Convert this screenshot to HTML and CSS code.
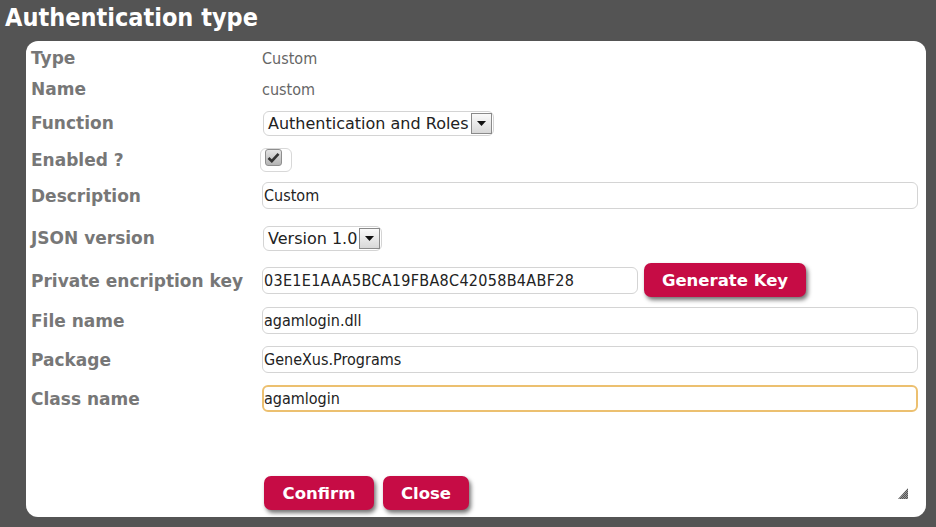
FILE: index.html
```html
<!DOCTYPE html>
<html>
<head>
<meta charset="utf-8">
<link rel="stylesheet" href="styles.css">
</head>
<body>
<h1 class="title">Authentication type</h1>
<div class="panel">
  <div class="form">
    <div class="label">Type</div>
    <div class="value">Custom</div>

    <div class="label">Name</div>
    <div class="value">custom</div>

    <div class="label">Function</div>
    <div><span class="select"><span class="select-text">Authentication and Roles</span><span class="arrow"><svg width="9" height="5" viewBox="0 0 9 5"><path d="M0 0H9L4.5 5Z" fill="#111"/></svg></span></span></div>

    <div class="label">Enabled ?</div>
    <div><span class="check-wrap"><span class="check"><svg width="13" height="11" viewBox="0 0 13 11"><path d="M1.5 6 L4.8 9.2 L11.5 1.8" fill="none" stroke="#333" stroke-width="2.6"/></svg></span></span></div>

    <div class="label">Description</div>
    <div class="input">Custom</div>

    <div class="label">JSON version</div>
    <div><span class="select"><span class="select-text">Version 1.0</span><span class="arrow"><svg width="9" height="5" viewBox="0 0 9 5"><path d="M0 0H9L4.5 5Z" fill="#111"/></svg></span></span></div>

    <div class="label">Private encription key</div>
    <div class="key-row"><div class="input key">03E1E1AAA5BCA19FBA8C42058B4ABF28</div><button class="btn gen">Generate Key</button></div>

    <div class="label">File name</div>
    <div class="input">agamlogin.dll</div>

    <div class="label">Package</div>
    <div class="input">GeneXus.Programs</div>

    <div class="label">Class name</div>
    <div class="input focus">agamlogin</div>
  </div>
  <div class="actions">
    <button class="btn confirm">Confirm</button>
    <button class="btn close">Close</button>
  </div>
  <svg class="grip" width="10" height="11" viewBox="0 0 10 11">
    <defs>
      <pattern id="dots" width="2" height="2" patternUnits="userSpaceOnUse">
        <rect width="1" height="1" fill="#555"/>
        <rect x="1" y="1" width="1" height="1" fill="#555"/>
        <rect x="1" width="1" height="1" fill="#999"/>
        <rect y="1" width="1" height="1" fill="#999"/>
      </pattern>
    </defs>
    <path d="M10 0V11H0Z" fill="url(#dots)"/>
  </svg>
</div>
</body>
</html>
```

FILE: styles.css
```css
* { box-sizing: border-box; }
html, body { margin: 0; padding: 0; }
body {
  background: #545454;
  width: 936px;
  height: 527px;
  overflow: hidden;
  font-family: "DejaVu Sans Condensed", "DejaVu Sans", sans-serif;
}
.title {
  margin: 0;
  padding: 3px 0 0 5px;
  height: 41px;
  color: #fff;
  font-size: 25px;
  font-weight: bold;
  line-height: 30px;
}
.panel {
  position: relative;
  margin-left: 26px;
  width: 900px;
  height: 476px;
  background: #fff;
  border-radius: 12px;
  padding: 2px 8px 0 5px;
}
.form {
  display: grid;
  grid-template-columns: 231px 1fr;
  grid-template-rows: 30px 32px 36px 37px 35px 50px 35px 45px 33px 45px;
  align-items: center;
}
.label {
  color: #777;
  font-family: "DejaVu Sans", sans-serif;
  font-weight: bold;
  font-size: 17px;
  white-space: nowrap;
}
.value {
  color: #666;
  font-size: 16px;
}
.input {
  height: 27px;
  border: 1px solid #d4d4d4;
  border-radius: 6px;
  padding: 0 2px 0 1px;
  font-size: 16px;
  line-height: 25px;
  color: #222;
  white-space: nowrap;
}
.input.focus {
  border: 2px solid #ecc070;
  line-height: 23px;
  padding-left: 0;
}
.select {
  display: inline-flex;
  align-items: center;
  height: 25px;
  margin-left: 1px;
  border: 1px solid #d4d4d4;
  border-radius: 6px;
  padding: 0 1px 0 4px;
  font-family: "DejaVu Sans", sans-serif;
  font-size: 16px;
  color: #222;
}
.select-text { margin-right: 2px; }
.arrow {
  width: 21px;
  height: 21px;
  border: 1px solid #8a8a8a;
  background: linear-gradient(#fafafa, #d8d8d8);
  display: flex;
  align-items: center;
  justify-content: center;
}
.check-wrap {
  display: inline-flex;
  align-items: center;
  justify-content: center;
  width: 32px;
  height: 24px;
  margin-left: -2px;
  border: 1px solid #d8d8d8;
  border-radius: 6px;
  padding: 0 6px 4px 0;
}
.check {
  display: flex;
  align-items: center;
  justify-content: center;
  width: 17px;
  height: 17px;
  border: 1px solid #8e8e8e;
  border-radius: 3px;
  background: linear-gradient(#e4e4e4, #b4b4b4);
}
.key-row {
  display: flex;
  align-items: center;
  gap: 6px;
}
.input.key { width: 376px; letter-spacing: 0.3px; }
.btn {
  border: none;
  background: #c60c45;
  color: #fff;
  font-family: "DejaVu Sans", sans-serif;
  font-weight: bold;
  font-size: 16.5px;
  border-radius: 7px;
  box-shadow: 2px 3px 4px rgba(0,0,0,0.55);
  height: 34px;
  padding: 0;
  cursor: pointer;
}
.gen { width: 162px; margin-top: -1px; }
.actions {
  display: flex;
  gap: 9px;
  padding-left: 233px;
  margin-top: 55px;
}
.confirm { width: 110px; }
.close { width: 86px; }
.grip {
  position: absolute;
  right: 18px;
  bottom: 18px;
}
```
